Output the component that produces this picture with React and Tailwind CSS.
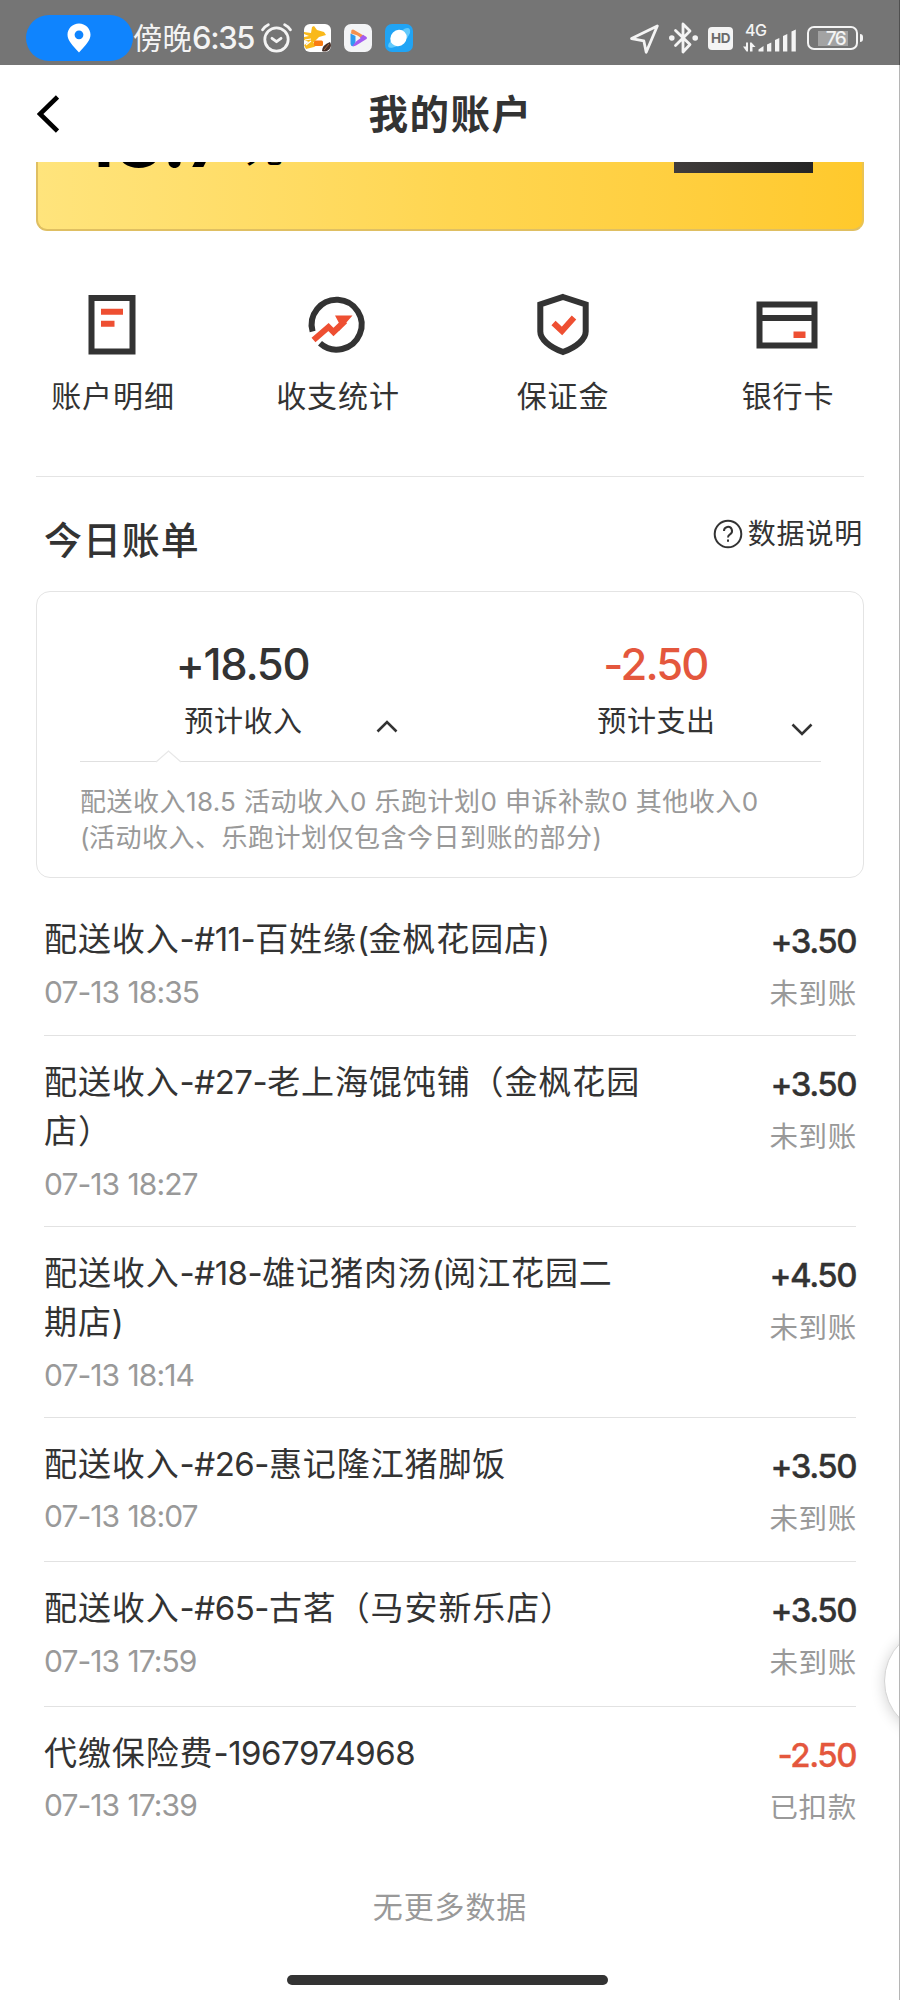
import React from "react";

const FONT = "font-['Inter','Noto_Sans_CJK_SC',sans-serif]";

/* Wraps the Latin runs of a mixed string so that their tracking can differ from the Chinese text. */
function Mixed({ text, latin }) {
  return text.split(/([\x21-\x7e]+)/).map((part, i) =>
    i % 2 ? (
      <span key={i} className={latin}>
        {part}
      </span>
    ) : (
      part
    )
  );
}

function StatusBar() {
  return (
    <div className="flex h-[65px] shrink-0 items-start bg-[#757575] text-[#f4f4f4]">
      <div className="ml-[26px] mt-[15px] flex h-[46px] w-[107px] items-center justify-center rounded-full bg-[#0f84fe]">
        <svg className="-ml-[2px] h-[30px] w-[24px]" viewBox="0 0 24 30">
          <path fill="#fff" fillRule="evenodd" d="M12 0.5C5.6 0.5 .5 5.5 .5 11.8c0 5.500 4.500 10 11.500 17.700 7-7.700 11.500-12.200 11.500-17.700C23.500 5.500 18.400.5 12 .5zM12 7.400a4.400 4.400 0 1 1 0 8.800 4.400 4.400 0 0 1 0-8.800z" />
        </svg>
      </div>
      <div className="mt-[18px] w-[128px] whitespace-nowrap text-[29.500px] leading-[40px]">
        <Mixed text="傍晚6:35" latin="text-[31px] font-medium tracking-[-1.400px]" />
      </div>
      <svg className="mt-[23px] h-[30px] w-[31px]" viewBox="0 0 31 30" fill="none" stroke="#f4f4f4" strokeWidth="2.800" strokeLinecap="round" strokeLinejoin="round">
        <circle cx="15.500" cy="16.500" r="11.700" />
        <path d="M11 15.300l4.500 3.400 4.500-3.400M1.600 6.800Q3.500 3.500 7.300 1.700M29.400 6.800Q27.500 3.500 23.700 1.700" />
      </svg>
      <svg className="ml-[12px] mt-[24px] h-[28px] w-[28px]" viewBox="0 0 28 28">
        <rect width="27" height="28" rx="6" fill="#fff" />
        <path fill="#f9b91b" d="M0 8l7 1 1-6 2-1 3 4 7 2 2 3-7 2-3 3-3 3 6 1-5 3-8 2H2l-2-4 5-3-5-2v-3l5-1-5-2z" />
        <path d="M1 16l6-1M2 21l5-4" stroke="#fff" strokeWidth="1.200" />
        <rect x="10" y="16.500" width="9" height="5.500" rx="1.500" fill="#f97b12" />
        <path d="M18 27q0-6 8-9 3 5-3 9-3 1-5 0z" fill="#46302a" />
        <path d="M20 26l5-6" stroke="#b06a3c" strokeWidth="1" />
      </svg>
      <svg className="ml-[12px] mt-[24px] h-[28px] w-[28px]" viewBox="0 0 28 28">
        <rect width="28" height="28" rx="7" fill="#f3f4f6" />
        <path d="M7.500 6Q9 5 11 6.500L22 13l-4 1.500-5-3.200L7 9.500z" fill="#f5914f" />
        <path d="M6.500 9.500L11.500 12v6L10 22Q7 23 6.500 20z" fill="#2f9bf0" />
        <path d="M19 10.800L22.500 13q1 1 0 2L12 21.500Q10 22.500 8.500 22l4-5z" fill="#a45cf0" />
        <path d="M12 11.500l4.500 2.700-4.500 3z" fill="#f3f4f6" />
      </svg>
      <svg className="ml-[13px] mt-[24px] h-[28px] w-[28px]" viewBox="0 0 28 28">
        <rect width="28" height="28" rx="7" fill="#20a4f5" />
        <path d="M4 19Q1 25 8 23.500 20 21 25 9 26 2 19 5z" fill="#62cafc" />
        <ellipse cx="13.500" cy="14" rx="8.600" ry="7.800" transform="rotate(-45 13.500 14)" fill="#fff" />
      </svg>
      <svg className="ml-[217px] mt-[24px] h-[30px] w-[29px]" viewBox="0 0 29 30" fill="none" stroke="#f4f4f4" strokeWidth="2.800" strokeLinejoin="round">
        <path d="M27.300 2L1.600 14.600l12.200 2.200 2.400 11.500z" />
      </svg>
      <svg className="ml-[10px] mt-[22px] h-[32px] w-[29px]" viewBox="0 0 29 32" fill="none" stroke="#f4f4f4" strokeWidth="2.800" strokeLinejoin="round" strokeLinecap="round">
        <path d="M6.500 8.500L21 22.500l-7 7.500V2l7 7L6.500 23.500" />
        <circle cx="2.800" cy="16" r="1.400" fill="#f4f4f4" />
        <circle cx="26.200" cy="16" r="1.400" fill="#f4f4f4" />
      </svg>
      <div className="ml-[10px] mt-[27px] flex h-[23px] w-[25px] items-center justify-center rounded-[4px] bg-[#f4f4f4] text-[13.500px] font-bold leading-none tracking-[-0.300px] text-[#6a6a6a]">
        HD
      </div>
      <div className="ml-[10px] mt-[22px] flex h-[30px] w-[54px] flex-col">
        <span className="ml-[2px] text-[16px] font-medium leading-[16px] tracking-[-0.5px]">4G</span>
        <svg className="-mt-[12px] h-[26px] w-[54px] shrink-0" viewBox="0 0 54 26" fill="#f4f4f4">
          <path d="M0 20.500h3V16.500h2V25.500H3.500zM7 16.500h1.500L12.500 21H9.500v4.500H7z" />
          <path d="M15.500 25.500v-2l5-3.500v5.500zM24 18.500l4.300-2V25.500h-4.300zM32 14l4.300-2v13.500h-4.300zM40 10l4.300-2v17.500h-4.300zM48.500 5.500l4.300-2v22h-4.300z" />
        </svg>
      </div>
      <div className="ml-[10px] mt-[26px] flex items-center">
        <div className="flex h-[24px] w-[51px] items-center justify-center rounded-[7px] border-2 border-[#f4f4f4]">
          <span className="flex h-[15px] w-[30px] items-center justify-center bg-[#a3a3a3] pl-[6px] text-[19px] font-medium leading-none tracking-[-1.500px]">76</span>
        </div>
        <div className="ml-[2px] h-[8px] w-[3px] rounded-r-full bg-[#f4f4f4]" />
      </div>
    </div>
  );
}

function Header() {
  return (
    <div className="flex h-[97px] shrink-0 items-center bg-white pl-[37px] pr-[59px]">
      <svg className="h-[38px] w-[22px]" viewBox="0 0 22 38" fill="none" stroke="#000" strokeWidth="4.600">
        <path d="M20.500 2L3 19l17.500 17" />
      </svg>
      <h1 className="flex-1 pl-px pt-[2px] text-center text-[39.500px] font-semibold leading-[60px] tracking-[1.500px]">我的账户</h1>
    </div>
  );
}

function BalanceCard() {
  return (
    <div className="mx-[36px] flex h-[69px] shrink-0 items-start justify-between overflow-hidden rounded-b-[11px] border-x-2 border-b-2 border-[#dfbf62] border-r-[#eac352] bg-linear-to-r from-[#ffe47c] via-[#ffd651] to-[#ffc92c] pl-[45px] pr-[49px]">
      <div className="-mt-[61px] flex items-start text-black">
        <span className="text-[72px] font-bold leading-[80px] tracking-[1.500px]">18.7</span>
        <span className="ml-[16px] mt-[17px] text-[38px] leading-[60px]">元</span>
      </div>
      <div className="h-[11px] w-[139px] bg-linear-to-r from-[#403c3b] to-[#252525]" />
    </div>
  );
}

function DetailIcon() {
  return (
    <svg className="-ml-[2px] h-[64px] w-[64px]" viewBox="0 0 64 64">
      <rect x="11.500" y="6" width="41" height="53.500" fill="none" stroke="#333" strokeWidth="6" />
      <path d="M21 19.700h22M21 31.700h13.500" stroke="#ee4f32" strokeWidth="6" />
    </svg>
  );
}

function StatsIcon() {
  return (
    <svg className="-ml-[2px] h-[64px] w-[64px]" viewBox="0 0 64 64">
      <path d="M7.600 39.500A25 25 0 1 1 15 51.300" fill="none" stroke="#333" strokeWidth="6" />
      <path d="M8.500 48L23.500 35 28.500 40 40 29" fill="none" stroke="#ee4f32" strokeWidth="6" />
      <path d="M30 23.500h17.500L34 39V31z" fill="#ee4f32" />
    </svg>
  );
}

function ShieldIcon() {
  return (
    <svg className="h-[64px] w-[64px]" viewBox="0 0 64 64" fill="none">
      <path d="M32 5L54.700 12.500v27c0 7.500-9 15.500-22.700 20.500C18.300 55 9.300 47 9.300 39.500V12.500z" stroke="#333" strokeWidth="6" />
      <path d="M22.500 31l8.500 8 12-13.500" stroke="#ee4f32" strokeWidth="6" />
    </svg>
  );
}

function CardIcon() {
  return (
    <svg className="-ml-[2px] h-[64px] w-[64px]" viewBox="0 0 64 64">
      <path d="M4.500 12.500h55v41h-55zM4.500 26h55" fill="none" stroke="#333" strokeWidth="6" />
      <rect x="38.500" y="39.500" width="12" height="6.500" fill="#ee4f32" />
    </svg>
  );
}

const shortcuts = [
  { label: "账户明细", Icon: DetailIcon },
  { label: "收支统计", Icon: StatsIcon },
  { label: "保证金", Icon: ShieldIcon },
  { label: "银行卡", Icon: CardIcon },
];

function Shortcuts() {
  return (
    <div className="grid h-[245px] shrink-0 grid-cols-4 pt-[61px]">
      {shortcuts.map(({ label, Icon }) => (
        <div key={label} className="flex flex-col items-center">
          <Icon />
          <span className="mt-[20px] pl-px text-[30px] leading-[40px] tracking-[0.900px]">{label}</span>
        </div>
      ))}
    </div>
  );
}

function Summary() {
  return (
    <div className="mx-[36px] mt-[32px] flex h-[287px] shrink-0 flex-col rounded-[14px] border border-[#e4e4e4] px-[43px]">
      <div className="-mx-[43px] flex h-[169px] pt-[47px]">
        <div className="relative w-[413px]">
          <div className="text-center">
            <div className="pr-[2px] text-[43.500px] font-medium leading-[50px] tracking-[-1.300px]">+18.50</div>
            <div className="mt-[13px] text-[29px] leading-[40px] tracking-[0.600px]">预计收入</div>
          </div>
          <svg className="absolute left-[339px] top-[79px] h-[16px] w-[22px]" viewBox="0 0 22 16" fill="none" stroke="#333" strokeWidth="2.600">
            <path d="M1.500 13.500L11 4l9.500 9.500" />
          </svg>
        </div>
        <div className="relative w-[413px]">
          <div className="text-center">
            <div className="pr-[2px] text-[43.500px] font-medium leading-[50px] tracking-[-1.800px] text-[#e4573d]">-2.50</div>
            <div className="mt-[13px] text-[29px] leading-[40px] tracking-[0.600px]">预计支出</div>
          </div>
          <svg className="absolute left-[341px] top-[83px] h-[16px] w-[22px]" viewBox="0 0 22 16" fill="none" stroke="#333" strokeWidth="2.600">
            <path d="M1.500 2.500L11 12l9.500-9.500" />
          </svg>
        </div>
      </div>
      <div className="relative h-px w-[741px] bg-[#e0e0e0]">
        <svg className="absolute -top-[11px] left-[75px] h-[13px] w-[28px]" viewBox="0 0 28 13">
          <path d="M1 12L13.500 1 26 12v1H1z" fill="#fff" />
          <path d="M1 12L13.500 1 26 12" fill="none" stroke="#e8e8e8" strokeWidth="1.300" />
        </svg>
      </div>
      <div className="mt-[22px] whitespace-nowrap text-[26px] leading-[36px] tracking-[0.500px] text-[#999]">
        <p>
          <Mixed text="配送收入18.5 活动收入0 乐跑计划0 申诉补款0 其他收入0" latin="tracking-[0.300px]" />
        </p>
        <p>
          <Mixed text="(活动收入、乐跑计划仅包含今日到账的部分)" latin="tracking-[-0.500px]" />
        </p>
      </div>
    </div>
  );
}

const bills = [
  { title: "配送收入-#11-百姓缘(金枫花园店)", time: "07-13 18:35", amount: "+3.50", state: "未到账", height: "h-[142.500px]" },
  { title: "配送收入-#27-老上海馄饨铺（金枫花园\n店）", time: "07-13 18:27", amount: "+3.50", state: "未到账", height: "h-[191px]" },
  { title: "配送收入-#18-雄记猪肉汤(阅江花园二\n期店)", time: "07-13 18:14", amount: "+4.50", state: "未到账", height: "h-[191px]" },
  { title: "配送收入-#26-惠记隆江猪脚饭", time: "07-13 18:07", amount: "+3.50", state: "未到账", height: "h-[144.500px]" },
  { title: "配送收入-#65-古茗（马安新乐店）", time: "07-13 17:59", amount: "+3.50", state: "未到账", height: "h-[144.500px]" },
  { title: "代缴保险费-1967974968", time: "07-13 17:39", amount: "-2.50", state: "已扣款", height: "h-[144.500px]", expense: true },
];

function Bill({ title, time, amount, state, height, expense }) {
  return (
    <li className={`flex shrink-0 justify-between border-b border-[#e2e2e2] pt-[22px] last:border-b-0 ${height}`}>
      <div>
        <div className="whitespace-pre text-[33px] leading-[49.500px] tracking-[0.900px]">
          <Mixed text={title} latin="tracking-[-0.500px]" />
        </div>
        <div className="mt-[7px] text-[30px] leading-[40px] tracking-[-0.950px] [word-spacing:1px] text-[#999]">{time}</div>
      </div>
      <div className="flex flex-col items-end pt-[6px]">
        <div className={`text-[33px] font-medium leading-[40px] tracking-[-1.500px] [-webkit-text-stroke:0.300px_currentColor] ${expense ? "text-[#e4573d]" : ""}`}>{amount}</div>
        <div className="-mr-px mt-[13px] text-[28.500px] leading-[40px] tracking-[0.700px] text-[#999]">{state}</div>
      </div>
    </li>
  );
}

export default function App() {
  return (
    <div className={`relative flex h-[2000px] w-[900px] flex-col overflow-hidden bg-white text-[#333] ${FONT}`}>
      <StatusBar />
      <Header />
      <BalanceCard />
      <Shortcuts />
      <div className="mx-[36px] h-px shrink-0 bg-[#e4e4e4]" />
      <div className="flex h-[82px] shrink-0 items-end justify-between pl-[44px] pr-[37px]">
        <h2 className="-mb-[6px] text-[38px] font-medium leading-[50px] tracking-[0.900px]">今日账单</h2>
        <div className="mb-[5px] flex items-center">
          <svg className="h-[30px] w-[30px]" viewBox="0 0 30 30" fill="none" stroke="#333" strokeWidth="2">
            <circle cx="15" cy="15" r="13.300" />
            <path d="M11 12a4 4 0 1 1 6 3.300q-2 1.200-2 3.200M15 20.500v2.300" />
          </svg>
          <span className="ml-[5px] text-[28px] leading-[40px] tracking-[0.800px]">数据说明</span>
        </div>
      </div>
      <Summary />
      <ul className="mx-[44px] mt-[15px] flex flex-col">
        {bills.map((bill) => (
          <Bill key={bill.time} {...bill} />
        ))}
      </ul>
      <div className="mt-[36px] text-center text-[30px] leading-[40px] tracking-[0.900px] text-[#999]">无更多数据</div>
      <div className="ml-[287px] mt-[48px] h-[10px] w-[321px] shrink-0 rounded-full bg-[#333]" />
      <div className="absolute left-[884px] top-[1627px] h-[108px] w-[108px] rounded-full border border-[#d4d4d4] bg-white shadow-[0_2px_14px_rgba(0,0,0,0.18)]" />
      <div className="absolute right-0 top-0 h-[65px] w-px bg-[#4f4f4f]" />
      <div className="absolute right-0 top-[65px] h-[1935px] w-px bg-[#b5b5b5]" />
    </div>
  );
}
